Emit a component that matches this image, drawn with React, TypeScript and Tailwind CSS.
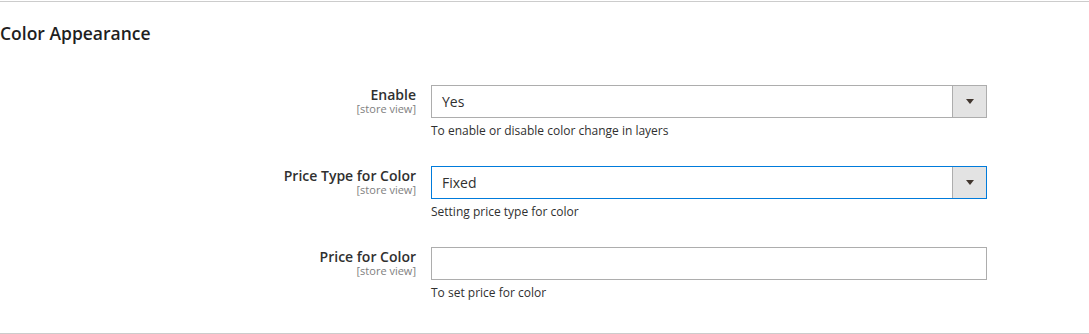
const rows = [
  {
    label: "Enable",
    kind: "select",
    value: "Yes",
    note: "To enable or disable color change in layers",
    focused: false,
  },
  {
    label: "Price Type for Color",
    kind: "select",
    value: "Fixed",
    note: "Setting price type for color",
    focused: true,
  },
  {
    label: "Price for Color",
    kind: "input",
    value: "",
    note: "To set price for color",
    focused: false,
  },
];

const App: React.FC = () => {
  return (
    <div className="w-[1089px] h-[334px] bg-white font-['Open_Sans',sans-serif] text-[#303030] flex flex-col">
      <div className="mt-px border-t border-[#cccccc]" />
      <h2 className="mt-[21px] text-[17.5px] leading-[20px] font-semibold text-[#1f1f1f]">Color Appearance</h2>

      <div className="mt-[42px] flex flex-col gap-[27px]">
        {rows.map((row) => (
          <div key={row.label} className="flex gap-[15px]">
            <div className="w-[416px] pt-[2px] text-right">
              <div className="text-[14px] leading-[16px] font-semibold">{row.label}</div>
              <div className="text-[11px] leading-[11px] text-[#808080]">[store view]</div>
            </div>
            <div className="w-[556px]">
              {row.kind === "select" ? (
                <div
                  className={`h-[33px] flex border bg-white ${
                    row.focused ? "border-[#007bdb]" : "border-[#adadad]"
                  }`}
                >
                  <div className="flex-1 flex items-center pl-[10px] text-[14px]">{row.value}</div>
                  <div className="w-[34px] bg-[#e3e3e3] border-l border-[#adadad] flex items-center justify-center">
                    <div className="w-0 h-0 border-x-[4px] border-t-[5px] border-x-transparent border-t-[#41362f]" />
                  </div>
                </div>
              ) : (
                <input
                  className="block w-full h-[33px] border border-[#adadad] px-[10px] text-[14px] outline-none"
                  defaultValue={row.value}
                />
              )}
              <div className="mt-[5px] text-[12px] leading-[16px]">{row.note}</div>
            </div>
          </div>
        ))}
      </div>

      <div className="mt-auto border-b border-[#cccccc]" />
    </div>
  );
};

export default App;
